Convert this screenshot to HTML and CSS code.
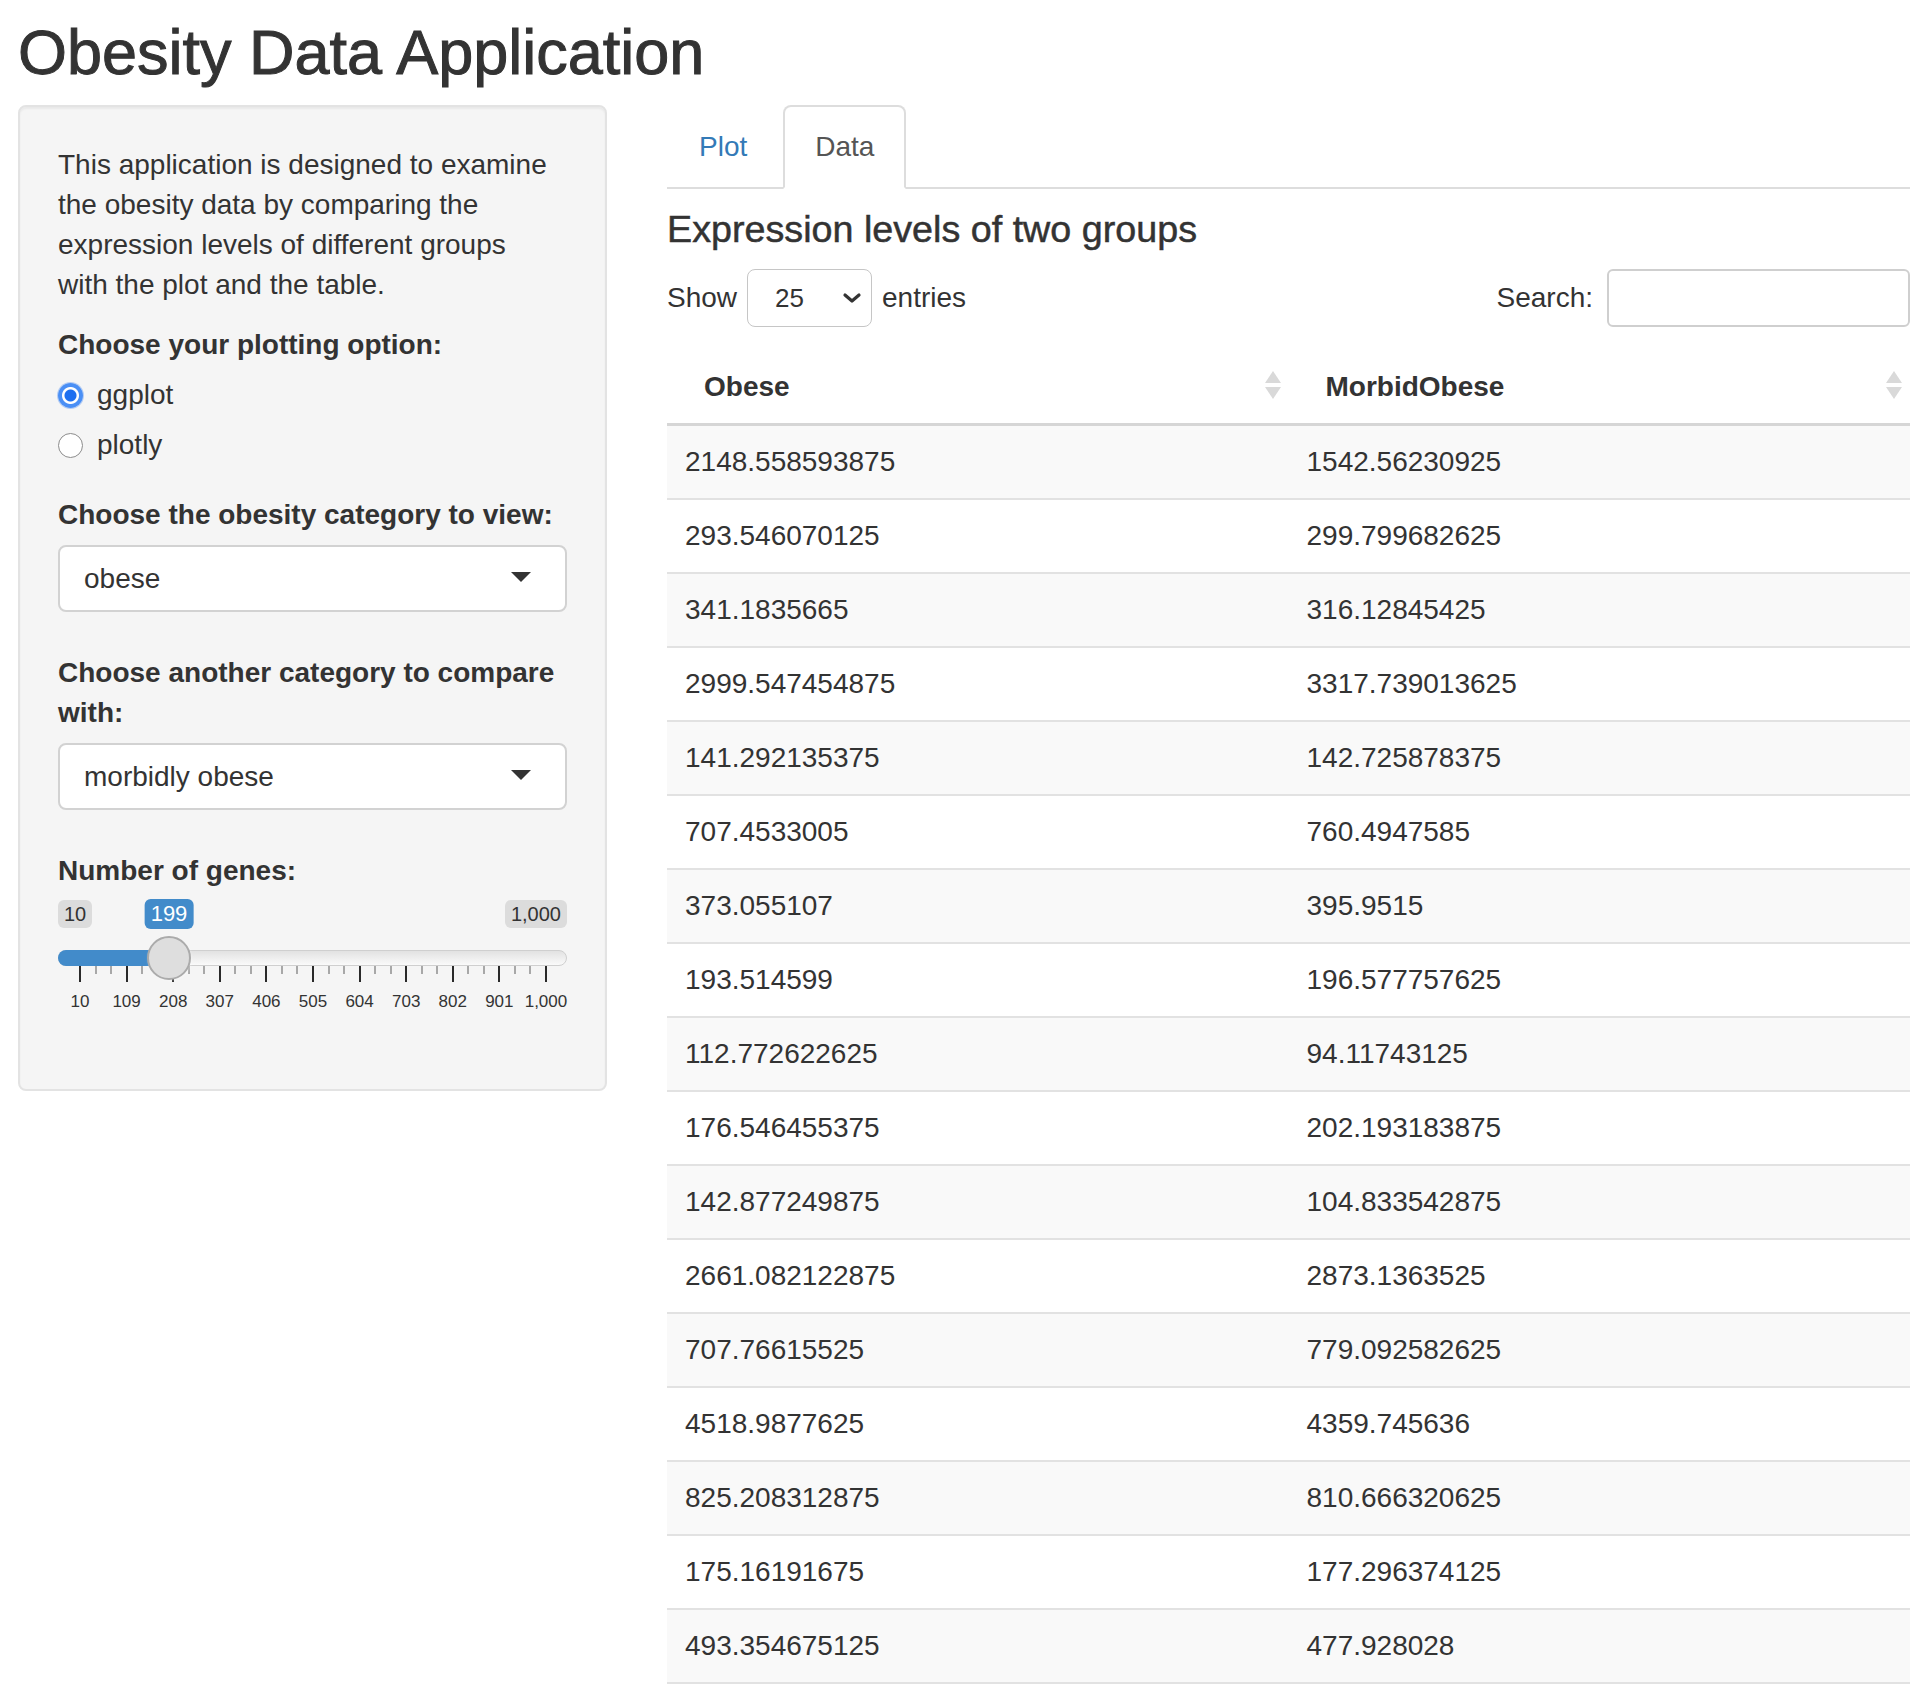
FILE: index.html
```html
<!DOCTYPE html>
<html lang="en">
<head>
<meta charset="utf-8">
<title>Obesity Data Application</title>
<link rel="stylesheet" href="styles.css">
</head>
<body>
<div class="page">
  <h2 class="title">Obesity Data Application</h2>
  <div class="layout">
    <div class="sidebar">
      <div class="well">
        <p class="intro">This application is designed to examine the obesity data by comparing the expression levels of different groups with the plot and the table.</p>

        <div class="form-group">
          <label class="control-label">Choose your plotting option:</label>
          <div class="radio-group">
            <label class="radio"><span class="radio-dot checked"></span><span>ggplot</span></label>
            <label class="radio"><span class="radio-dot"></span><span>plotly</span></label>
          </div>
        </div>

        <div class="form-group select-group">
          <label class="control-label">Choose the obesity category to view:</label>
          <div class="select"><span>obese</span><span class="caret"></span></div>
        </div>

        <div class="form-group select-group">
          <label class="control-label">Choose another category to compare with:</label>
          <div class="select"><span>morbidly obese</span><span class="caret"></span></div>
        </div>

        <div class="form-group">
          <label class="control-label slider-label">Number of genes:</label>
          <div class="slider">
            <div class="irs-top">
              <span class="irs-line"></span>
              <span class="irs-bar"></span>
              <span class="irs-min">10</span>
              <span class="irs-max">1,000</span>
              <span class="irs-single" style="left: 111px;">199</span>
              <span class="irs-handle" style="left: 89px;"></span>
            </div>
            <div class="irs-grid">
              <div class="ticks">
                <i class="tick big"></i><i class="tick"></i><i class="tick"></i>
                <i class="tick big"></i><i class="tick"></i><i class="tick"></i>
                <i class="tick big"></i><i class="tick"></i><i class="tick"></i>
                <i class="tick big"></i><i class="tick"></i><i class="tick"></i>
                <i class="tick big"></i><i class="tick"></i><i class="tick"></i>
                <i class="tick big"></i><i class="tick"></i><i class="tick"></i>
                <i class="tick big"></i><i class="tick"></i><i class="tick"></i>
                <i class="tick big"></i><i class="tick"></i><i class="tick"></i>
                <i class="tick big"></i><i class="tick"></i><i class="tick"></i>
                <i class="tick big"></i><i class="tick"></i><i class="tick"></i>
                <i class="tick big"></i>
              </div>
              <div class="grid-labels">
                <span>10</span><span>109</span><span>208</span><span>307</span><span>406</span><span>505</span><span>604</span><span>703</span><span>802</span><span>901</span><span>1,000</span>
              </div>
            </div>
          </div>
        </div>
      </div>
    </div>

    <div class="main">
      <ul class="tabs">
        <li class="tab">Plot</li>
        <li class="tab active">Data</li>
      </ul>
      <h4 class="subtitle">Expression levels of two groups</h4>
      <div class="dt-controls">
        <div class="length">
          <span>Show</span>
          <div class="length-select">
            <span>25</span>
            <svg class="chevron" width="20" height="12" viewBox="0 0 20 12"><path d="M3 3 L10 9 L17 3" fill="none" stroke="#333" stroke-width="3.2" stroke-linecap="round" stroke-linejoin="round"/></svg>
          </div>
          <span>entries</span>
        </div>
        <div class="search">
          <span>Search:</span>
          <div class="search-input"></div>
        </div>
      </div>
      <table class="dt">
        <thead>
          <tr>
            <th>Obese<svg class="sort" width="16" height="30" viewBox="0 0 16 30"><polygon points="0,13 8,1 16,13" fill="#d9d9d9"/><polygon points="0,17 8,29 16,17" fill="#d9d9d9"/></svg></th>
            <th>MorbidObese<svg class="sort" width="16" height="30" viewBox="0 0 16 30"><polygon points="0,13 8,1 16,13" fill="#d9d9d9"/><polygon points="0,17 8,29 16,17" fill="#d9d9d9"/></svg></th>
          </tr>
        </thead>
        <tbody>
          <tr><td>2148.558593875</td><td>1542.56230925</td></tr>
          <tr><td>293.546070125</td><td>299.799682625</td></tr>
          <tr><td>341.1835665</td><td>316.12845425</td></tr>
          <tr><td>2999.547454875</td><td>3317.739013625</td></tr>
          <tr><td>141.292135375</td><td>142.725878375</td></tr>
          <tr><td>707.4533005</td><td>760.4947585</td></tr>
          <tr><td>373.055107</td><td>395.9515</td></tr>
          <tr><td>193.514599</td><td>196.577757625</td></tr>
          <tr><td>112.772622625</td><td>94.11743125</td></tr>
          <tr><td>176.546455375</td><td>202.193183875</td></tr>
          <tr><td>142.877249875</td><td>104.833542875</td></tr>
          <tr><td>2661.082122875</td><td>2873.1363525</td></tr>
          <tr><td>707.76615525</td><td>779.092582625</td></tr>
          <tr><td>4518.9877625</td><td>4359.745636</td></tr>
          <tr><td>825.208312875</td><td>810.666320625</td></tr>
          <tr><td>175.16191675</td><td>177.296374125</td></tr>
          <tr><td>493.354675125</td><td>477.928028</td></tr>
        </tbody>
      </table>
    </div>
  </div>
</div>
</body>
</html>
```

FILE: styles.css
```css
* {
  box-sizing: border-box;
}

body {
  margin: 0;
  background: #fff;
  color: #333;
  font-family: "Liberation Sans", Arial, "Helvetica Neue", sans-serif;
  font-size: 28px;
  line-height: 40px;
}

.page {
  padding: 0 21px 0 18px;
}

.title {
  font-size: 63px;
  font-weight: 400;
  line-height: 66px;
  margin: 19px 0 20px;
  color: #333;
  -webkit-text-stroke: 1px #333;
}

.layout {
  display: flex;
  gap: 60px;
  align-items: flex-start;
}

.sidebar {
  width: 589px;
  flex: none;
}

.well {
  background: #f5f5f5;
  border: 2px solid #e3e3e3;
  border-radius: 8px;
  padding: 38px 38px 36px;
  box-shadow: inset 0 2px 2px rgba(0, 0, 0, 0.05);
}

.intro {
  margin: 0 0 20px;
  max-width: 500px;
}

.form-group {
  margin-bottom: 30px;
}

.select-group {
  margin-bottom: 41px;
}

.control-label {
  display: block;
  font-weight: bold;
  margin-bottom: 10px;
}

.slider-label {
  margin-bottom: 8px;
}

.radio-group {
  display: flex;
  flex-direction: column;
  gap: 10px;
}

.radio {
  display: flex;
  align-items: center;
  height: 40px;
}

.radio-dot {
  width: 25px;
  height: 25px;
  border-radius: 50%;
  background: #fff;
  border: 1.5px solid #8c8c8c;
  margin-right: 14px;
  flex: none;
}

.radio-dot.checked {
  border: none;
  background: radial-gradient(circle, #1d6ff0 0 5.5px, #ffffff 6.5px 8px, #4a8ff5 9px);
  box-shadow: 0 0 0 1px rgba(60, 130, 240, 0.35);
}

.select {
  height: 67px;
  background: #fff;
  border: 2px solid #d2d2d2;
  border-radius: 8px;
  padding: 0 34px 0 24px;
  display: flex;
  align-items: center;
  justify-content: space-between;
}

.caret {
  width: 0;
  height: 0;
  border-left: 10px solid transparent;
  border-right: 10px solid transparent;
  border-top: 10px solid #333;
  margin-top: -4px;
}

/* slider (ion.rangeSlider, shiny skin) */
.slider {
  height: 124px;
}

.irs-top {
  position: relative;
  height: 67px;
}

.irs-line {
  position: absolute;
  top: 51px;
  left: 0;
  right: 0;
  height: 16px;
  border-radius: 8px;
  border: 1.5px solid #cfcfcf;
  background: linear-gradient(#e2e2e2, #fafafa);
}

.irs-bar {
  position: absolute;
  top: 51px;
  left: 0;
  width: 112px;
  height: 16px;
  border-radius: 8px 0 0 8px;
  background: #428bca;
}

.irs-min,
.irs-max {
  position: absolute;
  top: 1px;
  font-size: 20px;
  line-height: 26px;
  padding: 1px 6px;
  background: rgba(0, 0, 0, 0.1);
  border-radius: 6px;
  color: #333;
}

.irs-min {
  left: 0;
}

.irs-max {
  right: 0;
}

.irs-single {
  position: absolute;
  top: 0;
  font-size: 22px;
  line-height: 28px;
  padding: 1px 6px;
  background: #428bca;
  color: #fff;
  border-radius: 6px;
  transform: translateX(-50%);
}

.irs-handle {
  position: absolute;
  top: 37px;
  width: 44px;
  height: 44px;
  border-radius: 50%;
  background: #dedede;
  border: 2px solid #ababab;
  box-shadow: 1px 1px 3px rgba(255, 255, 255, 0.3);
  z-index: 2;
}

.irs-grid {
  margin-left: 21px;
  width: 468px;
}

.ticks {
  display: flex;
  justify-content: space-between;
  align-items: flex-start;
  height: 16px;
}

.tick {
  display: block;
  width: 2px;
  height: 8px;
  background: #a8a8a8;
}

.tick.big {
  height: 16px;
  background: #2a2a2a;
}

.grid-labels {
  display: flex;
  justify-content: space-between;
  margin-top: 10px;
  font-size: 17px;
  line-height: 20px;
  color: #333;
}

.grid-labels span {
  width: 2px;
  display: flex;
  justify-content: center;
  white-space: nowrap;
}

/* main panel */
.main {
  flex: 1;
  min-width: 0;
}

.tabs {
  display: flex;
  list-style: none;
  margin: 0;
  padding: 0;
  border-bottom: 2px solid #ddd;
}

.tab {
  padding: 20px 30px;
  line-height: 40px;
  border: 2px solid transparent;
  border-radius: 8px 8px 0 0;
  margin-right: 4px;
  margin-bottom: -2px;
  color: #337ab7;
}

.tab.active {
  color: #555;
  background: #fff;
  border-color: #ddd #ddd transparent;
}

.subtitle {
  font-size: 37.7px;
  font-weight: 400;
  line-height: 40px;
  margin: 20px 0;
  color: #333;
  -webkit-text-stroke: 0.5px #333;
}

.dt-controls {
  display: flex;
  justify-content: space-between;
  align-items: center;
  height: 58px;
}

.length {
  display: flex;
  align-items: center;
  gap: 10px;
}

.length-select {
  width: 125px;
  height: 58px;
  border: 1.5px solid #c6c6c6;
  border-radius: 8px;
  background: #fff;
  display: flex;
  align-items: center;
  justify-content: space-between;
  padding: 0 9px 0 27px;
  font-size: 26px;
}

.search {
  display: flex;
  align-items: center;
  gap: 14px;
}

.search-input {
  width: 303px;
  height: 58px;
  border: 2px solid #cfcfcf;
  border-radius: 6px;
  background: #fff;
}

.dt {
  width: 100%;
  border-collapse: collapse;
  table-layout: fixed;
  margin-top: 16px;
}

.dt th {
  text-align: left;
  font-weight: bold;
  padding: 24px 8px 16px 37px;
  line-height: 40px;
  border-bottom: 3px solid #d6d6d6;
}

.sort {
  float: right;
  margin-top: 3px;
}

.dt td {
  padding: 16px 18px;
  line-height: 40px;
  border-top: 2px solid #e2e2e2;
}

.dt tbody tr:first-child td {
  border-top: none;
}

.dt tbody tr:nth-child(odd) {
  background: #f9f9f9;
}

.dt tbody tr:last-child td {
  border-bottom: 2px solid #e2e2e2;
}
```
